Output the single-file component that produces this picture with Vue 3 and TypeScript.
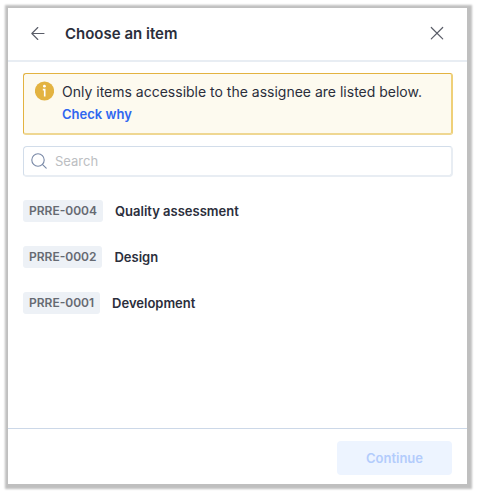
<script setup lang="ts">
import { ref } from 'vue'

interface Item {
  code: string
  name: string
}

const query = ref<string>('')
const items: Item[] = [
  { code: 'PRRE-0004', name: 'Quality assessment' },
  { code: 'PRRE-0002', name: 'Design' },
  { code: 'PRRE-0001', name: 'Development' },
]
</script>

<template>
  <main class="stage">
    <section class="dialog" aria-labelledby="dialog-title">
      <header class="head">
        <button class="icon-btn" type="button" aria-label="Back">
          <svg width="16" height="16" viewBox="0 0 16 16" fill="none" stroke="currentColor" stroke-width="1.1" stroke-linecap="round" stroke-linejoin="round">
            <path d="M14 7.5H2M7.8 1.5L1.8 7.5L7.8 13.5" />
          </svg>
        </button>
        <h1 id="dialog-title" class="title">Choose an item</h1>
        <button class="icon-btn" type="button" aria-label="Close">
          <svg width="16" height="16" viewBox="0 0 16 16" fill="none" stroke="currentColor" stroke-width="1.2" stroke-linecap="round">
            <path d="M2.3 1.5L13.7 12.9M13.7 1.5L2.3 12.9" />
          </svg>
        </button>
      </header>
      <div class="body">
        <div class="notice">
          <svg class="info" width="19" height="20" viewBox="0 0 19 20">
            <circle cx="9.5" cy="10" r="9.6" fill="#e3b341" />
            <circle cx="9.4" cy="5.2" r="1.4" fill="#fff" />
            <path d="M7.8 8.6H9.7V15.6" fill="none" stroke="#fff" stroke-width="1.6" />
          </svg>
          <p class="notice-text">
            Only items accessible to the assignee are listed below.
            <a class="link" href="#">Check why</a>
          </p>
        </div>
        <label class="search">
          <svg width="16" height="16" viewBox="0 0 16 16" fill="none" stroke="#7888a6" stroke-width="1.1" stroke-linecap="round">
            <circle cx="7" cy="7" r="6.2" />
            <path d="M11.6 11.6L15.2 15.2" />
          </svg>
          <input v-model="query" type="text" placeholder="Search" aria-label="Search" />
        </label>
        <ul class="list">
          <li v-for="item in items" :key="item.code" class="row">
            <span class="code">{{ item.code }}</span>
            <span class="name">{{ item.name }}</span>
          </li>
        </ul>
      </div>
      <footer class="foot">
        <button class="continue" type="button" disabled>Continue</button>
      </footer>
    </section>
  </main>
</template>

<style>
body {
  background: #fff;
}
</style>

<style scoped>
.stage {
  box-sizing: border-box;
  display: flex;
  min-height: 100vh;
  padding: 8px 10px 10px 8px;
  font-family: Inter, "Liberation Sans", sans-serif;
  color: #2b2e3b;
}
.dialog {
  display: flex;
  flex: 1;
  flex-direction: column;
  background: #fff;
  box-shadow: 1px 1px 2px 4px #bfbfbf;
}
.head {
  display: flex;
  align-items: center;
  gap: 12px;
  height: 52px;
  padding: 0 15px;
  border-bottom: 2px solid #e8edf3;
}
.icon-btn {
  display: flex;
  align-items: center;
  justify-content: center;
  width: 30px;
  height: 30px;
  padding: 0;
  border: 0;
  background: none;
  color: #5a5d68;
}
.title {
  flex: 1;
  margin: 0;
  font-size: 15px;
  font-weight: 600;
  line-height: 22px;
}
.body {
  flex: 1;
  padding: 11px 14px 11px 15px;
}
.notice {
  display: flex;
  gap: 8px;
  padding: 7px 11px 8px;
  border: 1px solid #e3b341;
  border-right: 2px solid #efd078;
  border-bottom: 2px solid #efd792;
  border-radius: 3px;
  background: #fdfaef;
}
.info {
  flex: none;
}
.notice-text {
  margin: 0;
  font-size: 14px;
  line-height: 22px;
}
.link {
  display: block;
  font-size: 13px;
  font-weight: 600;
  color: #2f66f0;
  text-decoration: none;
}
.search {
  display: flex;
  align-items: center;
  gap: 8px;
  height: 28px;
  margin-top: 11px;
  padding: 0 7px;
  border: 1px solid #d2ddea;
  border-right: 2px solid #e8edf3;
  border-bottom: 2px solid #e8edf3;
  border-radius: 4px;
}
.search input {
  flex: 1;
  min-width: 0;
  padding: 0;
  border: 0;
  outline: 0;
  background: none;
  font: 13px/20px Inter, "Liberation Sans", sans-serif;
  color: inherit;
}
.search input::placeholder {
  color: #bcbec2;
}
.list {
  display: grid;
  margin: 11px 0 0;
  padding: 0;
  list-style: none;
}
.row {
  display: flex;
  align-items: center;
  gap: 12px;
  height: 46px;
}
.code {
  padding: 0 6px;
  border-radius: 3px;
  background: #edf1f6;
  font-size: 12px;
  font-weight: 600;
  line-height: 22px;
  color: #666a72;
}
.name {
  font-size: 13px;
  font-weight: 600;
  line-height: 22px;
}
.foot {
  display: flex;
  justify-content: flex-end;
  padding: 12px 15px 9px;
  border-top: 1px solid #ccd8e8;
}
.continue {
  height: 34px;
  padding: 0 29px;
  border: 0;
  border-radius: 4px;
  background: #edf4ff;
  font: 600 13px/20px Inter, "Liberation Sans", sans-serif;
  color: #b3ccfc;
}
</style>
